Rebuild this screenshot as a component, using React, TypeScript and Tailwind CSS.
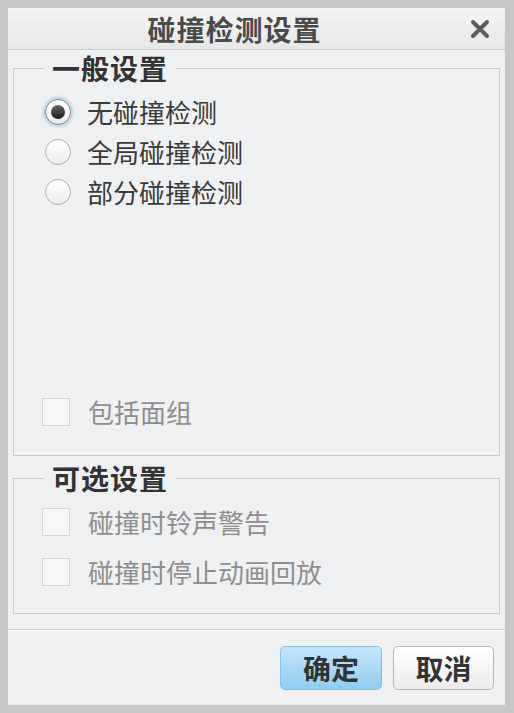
import React, { useState } from "react";

const FONT = { fontFamily: '"Noto Sans CJK SC", "Noto Sans", sans-serif' };

type Mode = "none" | "global" | "partial";

const Radio: React.FC<{ checked: boolean; label: string; onClick: () => void }> = ({
  checked,
  label,
  onClick,
}) => (
  <div className="flex h-[40px] items-center cursor-default" onClick={onClick}>
    <span
      className={`ml-[31px] flex h-[26px] w-[26px] items-center justify-center rounded-full border bg-gradient-to-b from-white to-[#ececec] ${
        checked
          ? "border-[#7f8183] shadow-[0_0_3px_2px_rgba(120,190,230,0.55)]"
          : "border-[#a9abad]"
      }`}
    >
      {checked && (
        <span className="h-[14px] w-[14px] rounded-full bg-gradient-to-b from-[#6a6a6a] to-[#1c1c1c]" />
      )}
    </span>
    <span className="ml-[16px] text-[26px] leading-none text-[#3a3a3a]">{label}</span>
  </div>
);

const Check: React.FC<{ label: string; className?: string }> = ({ label, className }) => (
  <div className={`flex items-center ${className ?? ""}`}>
    <span className="ml-[28px] h-[28px] w-[28px] border border-[#d3d4d6] bg-[#f6f6f7]" />
    <span className="ml-[18px] text-[26px] leading-none text-[#8e8e8e]">{label}</span>
  </div>
);

const App: React.FC = () => {
  const [mode, setMode] = useState<Mode>("none");

  return (
    <div
      className="flex h-[713px] w-[514px] flex-col border-[8px] border-r-[9px] border-[#c6c7c9] bg-[#eff0f2]"
      style={FONT}
    >
      {/* Title bar */}
      <div className="flex h-[42px] shrink-0 items-center border-b border-[#c9cacc] bg-gradient-to-b from-[#f5f5f5] to-[#e6e7e8]">
        <div className="flex-1 pl-[6px] text-center text-[28px] font-bold leading-none tracking-[1px] text-[#4a4a4a]">
          碰撞检测设置
        </div>
        <div className="flex w-[50px] items-center justify-center text-[#5c5c5c]">
          <svg width="20" height="20" viewBox="0 0 20 20">
            <path d="M3 3 L17 17 M17 3 L3 17" stroke="currentColor" strokeWidth="4" strokeLinecap="round" />
          </svg>
        </div>
      </div>

      {/* Body */}
      <div className="flex flex-1 flex-col px-[5px]">
        <fieldset className="h-[406px] border border-[#c8c9cb]">
          <legend className="ml-[30px] px-[8px] text-[28px] font-bold leading-[36px] tracking-[1px] text-[#333]">
            一般设置
          </legend>
          <div className="pt-[6px]">
            <Radio checked={mode === "none"} label="无碰撞检测" onClick={() => setMode("none")} />
            <Radio checked={mode === "global"} label="全局碰撞检测" onClick={() => setMode("global")} />
            <Radio checked={mode === "partial"} label="部分碰撞检测" onClick={() => setMode("partial")} />
          </div>
          <Check label="包括面组" className="mt-[186px]" />
        </fieldset>

        <fieldset className="mt-[4px] h-[154px] border border-[#c8c9cb]">
          <legend className="ml-[30px] px-[8px] text-[28px] font-bold leading-[36px] tracking-[1px] text-[#333]">
            可选设置
          </legend>
          <Check label="碰撞时铃声警告" className="mt-[12px]" />
          <Check label="碰撞时停止动画回放" className="mt-[22px]" />
        </fieldset>
      </div>

      {/* Footer */}
      <div className="flex h-[76px] shrink-0 items-center justify-end gap-[11px] border-t border-[#cfd0d2] pr-[11px] shadow-[inset_0_1px_0_#ffffff]">
        <button className="h-[44px] w-[102px] rounded-[5px] border border-[#86c0e2] bg-gradient-to-b from-[#c4e6fa] to-[#8fcdf1] text-[28px] font-bold leading-none text-[#333]">
          确定
        </button>
        <button className="h-[44px] w-[101px] rounded-[5px] border border-[#b4b5b7] bg-gradient-to-b from-white to-[#ebebec] text-[28px] font-bold leading-none text-[#333]">
          取消
        </button>
      </div>
    </div>
  );
};

export default App;
